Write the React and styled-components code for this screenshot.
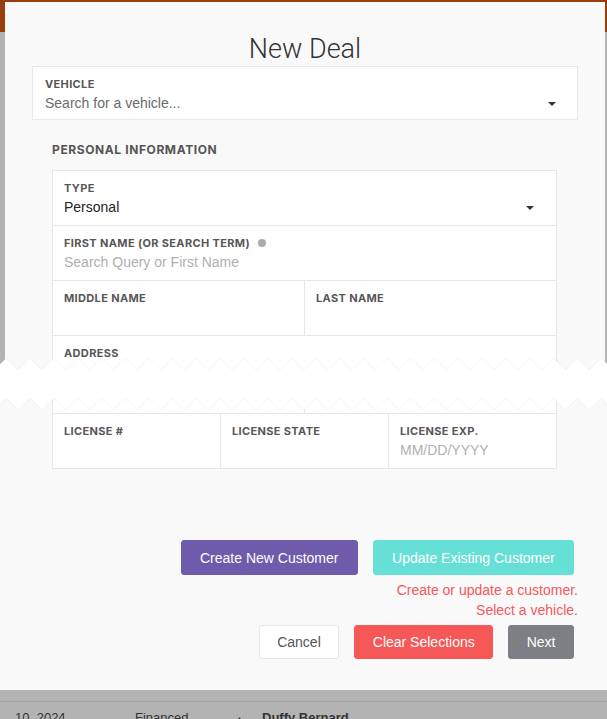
import React from "react";
import styled, { createGlobalStyle } from "styled-components";

const GlobalStyle = createGlobalStyle`
  html, body {
    margin: 0;
    padding: 0;
    height: 719px;
    overflow: hidden;
  }
  body {
    font-family: "Liberation Sans", Arial, sans-serif;
  }
  * {
    box-sizing: border-box;
  }
`;

const TEAR_PERIOD = 23.8;
const TEAR_OFFSET = 30;

const tearEdge = (shift) => {
  const pts = [];
  for (let k = -2; k < 27; k++) {
    const x = TEAR_OFFSET + k * TEAR_PERIOD;
    pts.push([x, 2 + shift]);
    pts.push([x + TEAR_PERIOD / 2, 14 + shift]);
  }
  return pts;
};

const TornStrip = () => {
  const top = tearEdge(0);
  const bottom = tearEdge(40);
  const poly = [...top, ...bottom.slice().reverse()]
    .map(([x, y]) => `${x},${y}`)
    .join(" ");
  const line = (pts) => pts.map(([x, y]) => `${x},${y}`).join(" ");
  return (
    <Tear width="607" height="56" viewBox="0 0 607 56">
      <polygon points={poly} fill="#ffffff" />
      <polyline points={line(top)} fill="none" stroke="rgba(0,0,0,0.06)" strokeWidth="0.8" />
      <polyline points={line(bottom)} fill="none" stroke="rgba(0,0,0,0.06)" strokeWidth="0.8" />
    </Tear>
  );
};

const App = () => {
  return (
    <Page>
      <GlobalStyle />
      <Modal>
        <Title>New Deal</Title>

        <Box>
          <Label>Vehicle</Label>
          <SelectRow>
            <Value muted>Search for a vehicle...</Value>
            <Caret />
          </SelectRow>
        </Box>

        <Section>
          <Heading>Personal Information</Heading>
          <Fields>
            <Row>
              <Cell>
                <Label>Type</Label>
                <SelectRow>
                  <Value>Personal</Value>
                  <Caret />
                </SelectRow>
              </Cell>
            </Row>
            <Row>
              <Cell>
                <Label>
                  First Name (or search term) <Dot />
                </Label>
                <Input placeholder="Search Query or First Name" />
              </Cell>
            </Row>
            <Row>
              <Cell>
                <Label>Middle Name</Label>
                <Input />
              </Cell>
              <Cell>
                <Label>Last Name</Label>
                <Input />
              </Cell>
            </Row>
            <Row>
              <Cell>
                <Label>Address</Label>
                <Input />
              </Cell>
            </Row>
            <Row>
              <Cell short />
              <Cell short />
            </Row>
            <Row>
              <Cell>
                <Label>License #</Label>
                <Input />
              </Cell>
              <Cell>
                <Label>License State</Label>
                <Input />
              </Cell>
              <Cell>
                <Label>License Exp.</Label>
                <Input placeholder="MM/DD/YYYY" />
              </Cell>
            </Row>
          </Fields>
        </Section>

        <Actions>
          <ButtonRow>
            <Button variant="purple">Create New Customer</Button>
            <Button variant="teal">Update Existing Customer</Button>
          </ButtonRow>
          <Errors>
            <span>Create or update a customer.</span>
            <span>Select a vehicle.</span>
          </Errors>
          <ButtonRow bottom>
            <Button variant="white">Cancel</Button>
            <Button variant="red">Clear Selections</Button>
            <Button variant="grey">Next</Button>
          </ButtonRow>
        </Actions>
      </Modal>

      <ListRow>
        <span>10, 2024</span>
        <span>Financed</span>
        <span>&#9650;</span>
        <strong>Duffy Bernard</strong>
      </ListRow>

      <TornStrip />
    </Page>
  );
};

export default App;

const Page = styled.div`
  position: relative;
  width: 607px;
  height: 719px;
  overflow: hidden;
  padding-top: 2px;
  background: linear-gradient(
    to bottom,
    #983d0e 0 32px,
    #b3b3b3 32px 380px,
    #f9f9f9 380px 690px,
    #b3b3b3 690px
  );
`;

const Modal = styled.div`
  display: flex;
  flex-direction: column;
  height: 688px;
  margin: 0 2px 0 5px;
  padding: 0 27px;
  background: #f9f9f9;
`;

const Title = styled.h1`
  margin: 32px 0 0;
  font-family: Roboto, "Liberation Sans", sans-serif;
  font-weight: 300;
  font-size: 27px;
  line-height: 30px;
  text-align: center;
  color: #333;
`;

const Box = styled.div`
  margin-top: 2px;
  height: 54px;
  padding: 10px 21px 7px 12px;
  background: #fff;
  border: 1px solid #e8e8e8;
`;

const Label = styled.div`
  display: flex;
  align-items: center;
  height: 14px;
  margin-bottom: 3px;
  font-family: Inter, "Open Sans", sans-serif;
  font-weight: 700;
  font-size: 11px;
  letter-spacing: 0.35px;
  text-transform: uppercase;
  color: #575757;
  white-space: nowrap;
`;

const Dot = styled.span`
  display: inline-block;
  width: 8px;
  height: 8px;
  margin-left: 8px;
  border-radius: 50%;
  background: #ababab;
`;

const SelectRow = styled.div`
  display: flex;
  align-items: center;
  justify-content: space-between;
  height: 18px;
`;

const Value = styled.span`
  font-size: 14px;
  line-height: 18px;
  color: ${(p) => (p.muted ? "#6b6b6b" : "#222")};
`;

const Caret = styled.span`
  width: 0;
  height: 0;
  margin-top: 2px;
  border-left: 4px solid transparent;
  border-right: 4px solid transparent;
  border-top: 4px solid #333;
`;

const Section = styled.section`
  padding: 0 21px 0 20px;
`;

const Heading = styled.h2`
  margin: 22px 0 12px;
  font-family: Inter, "Open Sans", sans-serif;
  font-weight: 700;
  font-size: 12px;
  line-height: 16px;
  letter-spacing: 0.6px;
  text-transform: uppercase;
  color: #555;
`;

const Fields = styled.div`
  border-top: 1px solid #e6e6e6;
  border-left: 1px solid #e6e6e6;
`;

const Row = styled.div`
  display: flex;
`;

const Cell = styled.div`
  flex: 1;
  min-width: 0;
  height: ${(p) => (p.short ? "23px" : "55px")};
  padding: 10px 22px 0 11px;
  background: #fff;
  border-right: 1px solid #e6e6e6;
  border-bottom: 1px solid #e6e6e6;
`;

const Input = styled.input`
  display: block;
  width: 100%;
  height: 18px;
  padding: 0;
  border: none;
  outline: none;
  background: transparent;
  font-family: "Liberation Sans", Arial, sans-serif;
  font-size: 14px;
  color: #222;
  &::placeholder {
    color: #b0b0b0;
  }
`;

const Actions = styled.div`
  display: flex;
  flex-direction: column;
  align-items: flex-end;
  margin-top: 71px;
`;

const ButtonRow = styled.div`
  display: flex;
  gap: 15px;
  padding-right: 4px;
  margin-top: ${(p) => (p.bottom ? "5px" : "0")};
`;

const palette = {
  purple: ["#6e5bab", "#fff", "#6e5bab"],
  teal: ["#66e0d6", "#fff", "#66e0d6"],
  white: ["#fff", "#555", "#e6e6e6"],
  red: ["#f65858", "#fff", "#f65858"],
  grey: ["#7c8084", "#fff", "#7c8084"],
};

const isPrimary = (v) => v === "purple" || v === "teal";

const Button = styled.button`
  height: ${(p) => (isPrimary(p.variant) ? "35px" : "34px")};
  padding: ${(p) => (isPrimary(p.variant) ? "0 18.3px" : "0 17.5px")};
  border-radius: 3px;
  border: 1px solid ${(p) => palette[p.variant][2]};
  background: ${(p) => palette[p.variant][0]};
  color: ${(p) => palette[p.variant][1]};
  font-family: "Liberation Sans", Arial, sans-serif;
  font-size: 14px;
`;

const Errors = styled.div`
  display: flex;
  flex-direction: column;
  align-items: flex-end;
  margin-top: 5px;
  font-size: 14px;
  line-height: 20px;
  color: #f5575b;
`;

const ListRow = styled.div`
  display: flex;
  align-items: baseline;
  margin-top: 11px;
  padding: 8px 0 0 15px;
  border-top: 1px solid #a3a3a3;
  font-size: 13px;
  line-height: 16px;
  color: #333;
  span:nth-child(1) {
    width: 120px;
  }
  span:nth-child(2) {
    width: 100px;
  }
  span:nth-child(3) {
    width: 27px;
    font-size: 9px;
  }
`;

const Tear = styled.svg`
  position: absolute;
  top: 356px;
  left: 0;
  display: block;
`;
